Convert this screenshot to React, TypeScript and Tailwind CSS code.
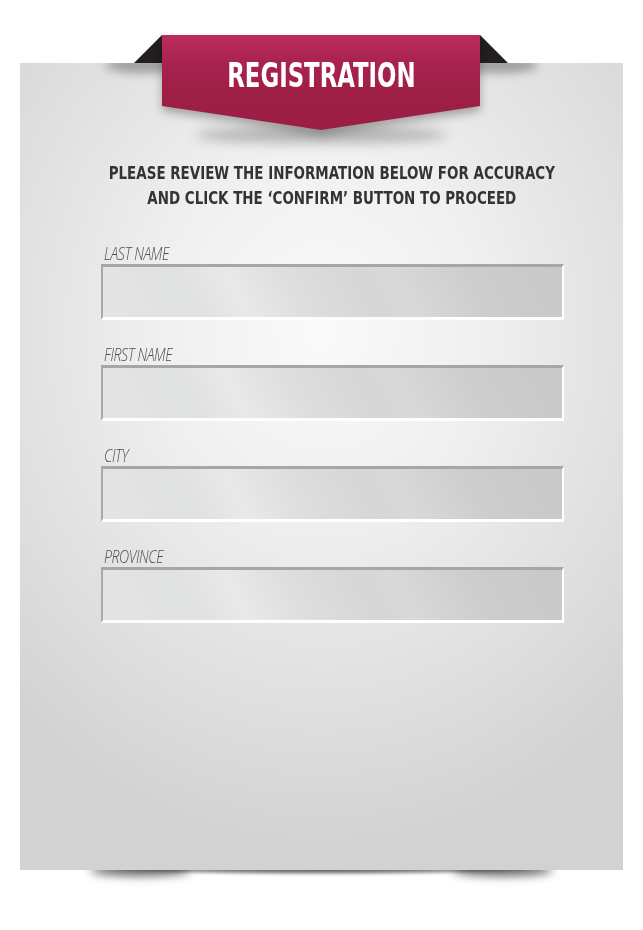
import React from "react";

const fields = ["LAST NAME", "FIRST NAME", "CITY", "PROVINCE"];

const condensed = "font-['DejaVu_Sans_Condensed','DejaVu_Sans',sans-serif]";

const Field = ({ label }: { label: string }) => (
  <div className="flex flex-col">
    <div className="h-[22px] pl-[3px]">
      <span className="inline-block origin-left scale-x-[0.78] font-['Open_Sans',sans-serif] text-[18px] font-light italic leading-[21px] tracking-[-0.5px] text-[#4d4d4d]">
        {label}
      </span>
    </div>
    <div className="h-[56px] border-t-[3px] border-l-[2px] border-b-[3px] border-r-[2px] border-t-[#a6a6a6] border-l-[#a9a9a9] border-b-white border-r-white bg-[linear-gradient(62deg,#e4e4e4_0%,#e0e1e1_20%,#e9e9e9_30%,#dedede_42%,#d6d6d6_58%,#d9d9d9_64%,#cdcdcd_80%,#c8c8c8_100%)]" />
  </div>
);

export default function App() {
  return (
    <div className="relative h-[930px] w-[643px] overflow-hidden bg-white">
      {/* card */}
      <div className="relative mx-[20px] mt-[63px] h-[807px] w-[603px]">
        {/* bottom shadow */}
        <div className="absolute bottom-[-5px] left-[65px] right-[65px] h-[8px] rounded-[50%] bg-[radial-gradient(ellipse_at_50%_0%,rgba(0,0,0,0.85)_0%,rgba(0,0,0,0.4)_50%,rgba(0,0,0,0)_75%)] blur-[1px]" />
        <div className="absolute bottom-[-6px] left-[70px] h-[12px] w-[100px] rounded-[50%] bg-black/60 blur-[5px]" />
        <div className="absolute bottom-[-6px] right-[70px] h-[12px] w-[100px] rounded-[50%] bg-black/60 blur-[5px]" />

        <div className="relative h-full w-full overflow-hidden bg-[radial-gradient(ellipse_75%_65%_at_50%_33%,#fafafa_0%,#f0f0f0_35%,#e0e0e0_70%,#d2d2d2_100%)]">
          {/* shadows cast by the ribbon folds */}
          <div className="absolute left-[85px] top-[-6px] h-[16px] w-[80px] rounded-[50%] bg-black/30 blur-[5px]" />
          <div className="absolute right-[85px] top-[-6px] h-[16px] w-[80px] rounded-[50%] bg-black/30 blur-[5px]" />
          <div className="absolute left-[175px] right-[175px] top-[64px] h-[16px] rounded-[50%] bg-black/25 blur-[6px]" />

          <div className="relative flex flex-col items-center pl-[20px] pt-[97px]">
            <p className={`${condensed} scale-x-[0.83] whitespace-nowrap text-center text-[18px] font-bold leading-[25px] text-[#333]`}>
              PLEASE REVIEW THE INFORMATION BELOW FOR ACCURACY
              <br />
              AND CLICK THE ‘CONFIRM’ BUTTON TO PROCEED
            </p>
          </div>

          <div className="relative ml-[81px] mt-[32px] flex w-[463px] flex-col gap-[23px]">
            {fields.map((f) => (
              <Field key={f} label={f} />
            ))}
          </div>
        </div>
      </div>

      {/* ribbon */}
      <div className="absolute left-[134px] top-[35px] flex h-[96px] w-[374px] items-start">
        <svg width="28" height="28" viewBox="0 0 28 28" className="shrink-0">
          <polygon points="0,28 28,0 28,28" fill="#231f20" />
        </svg>
        <div className="drop-shadow-[0_5px_5px_rgba(0,0,0,0.3)]">
          <div className="flex h-[95px] w-[318px] justify-center bg-[linear-gradient(to_bottom,#bc2c5a_0%,#a82350_30%,#9e1f46_60%,#9c1e44_100%)] [clip-path:polygon(0_0,100%_0,100%_71px,50%_95px,0_71px)]">
            <span className={`${condensed} mt-[21px] scale-x-[0.77] text-[33px] font-bold leading-[40px] text-white`}>
              REGISTRATION
            </span>
          </div>
        </div>
        <svg width="28" height="28" viewBox="0 0 28 28" className="shrink-0">
          <polygon points="0,0 28,28 0,28" fill="#231f20" />
        </svg>
      </div>
    </div>
  );
}
